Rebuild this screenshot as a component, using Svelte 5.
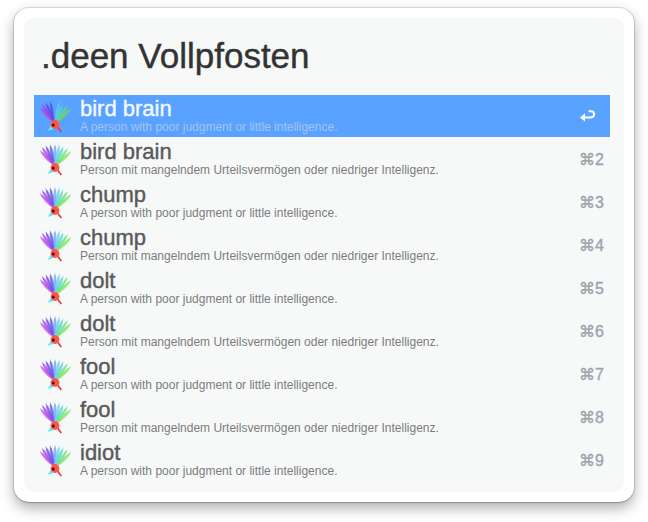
<script>
  let query = $state('.deen Vollpfosten');
  let selected = $state(0);

  const en = 'A person with poor judgment or little intelligence.';
  const de = 'Person mit mangelndem Urteilsvermögen oder niedriger Intelligenz.';
  const results = [
    { title: 'bird brain', text: en },
    { title: 'bird brain', text: de },
    { title: 'chump', text: en },
    { title: 'chump', text: de },
    { title: 'dolt', text: en },
    { title: 'dolt', text: de },
    { title: 'fool', text: en },
    { title: 'fool', text: de },
    { title: 'idiot', text: en }
  ];

  const feathers = [
    { x: 1.5, y: 8, color: '#c43ce6' },
    { x: 3.5, y: 4.5, color: '#9c3ce8' },
    { x: 7.5, y: 3, color: '#6a3ce0' },
    { x: 12, y: 2, color: '#4f48ec' },
    { x: 17, y: 1.5, color: '#6a9cf0' },
    { x: 21.5, y: 2, color: '#5fd0ee' },
    { x: 25.5, y: 4, color: '#50d6c0' },
    { x: 30, y: 6, color: '#62dc86' },
    { x: 33.5, y: 9, color: '#6ee24a' }
  ].map((f) => ({
    color: f.color,
    angle: (Math.atan2(f.x - 17, 25 - f.y) * 180) / Math.PI,
    tip: 25 - Math.hypot(f.x - 17, 25 - f.y)
  }));
</script>

<main>
  <section class="window">
    <div class="panel">
      <input class="query" type="text" aria-label="Search" bind:value={query} />
      <ul>
        {#each results as item, i}
          <li>
            <button class:selected={selected === i} onclick={() => (selected = i)}>
              <svg class="bird" viewBox="0 0 34 34" aria-hidden="true">
                {#each feathers as f}
                  <g transform="rotate({f.angle} 17 25)">
                    <path
                      d="M17 24 Q13.6 {f.tip + 9} 17 {f.tip} Q20.4 {f.tip + 9} 17 24Z"
                      fill={f.color}
                      fill-opacity="0.6"
                    />
                    <path d="M17 20V{f.tip + 3}" stroke={f.color} stroke-width="0.6" />
                  </g>
                {/each}
                <path d="M13 26.5 L9.5 32 L15.6 30Z" fill="#5feaf5" />
                <path d="M19.5 28 L23.3 33" stroke="#ef3340" stroke-width="1.7" />
                <circle cx="17" cy="25.5" r="4.4" fill="#fa5748" />
                <circle cx="15.4" cy="26" r="1.7" fill="#b12a25" />
                <circle cx="15.1" cy="26.2" r="1" fill="#120808" />
              </svg>
              <span class="copy">
                <span class="title">{item.title}</span>
                <span class="text">{item.text}</span>
              </span>
              {#if selected === i}
                <svg class="return" viewBox="0 0 16 12" aria-hidden="true">
                  <path d="M8.5 1.2H11A3 3 0 0 1 11 7.4H3" fill="none" stroke="#fff" stroke-width="2" />
                  <path d="M5 3.2V11.6L0 7.4Z" fill="#fff" />
                </svg>
              {:else}
                <kbd>⌘{i + 1}</kbd>
              {/if}
            </button>
          </li>
        {/each}
      </ul>
    </div>
  </section>
</main>

<style>
  :global(body) {
    margin: 0;
    background: #fff;
  }
  main {
    padding: 8px 14px 20px;
    font-family: 'Liberation Sans', Arial, sans-serif;
  }
  .window {
    padding: 10px;
    border-radius: 15px;
    background: #fff;
    box-shadow:
      0 0 1px 1px rgba(0, 0, 0, 0.13),
      0 1px 1px rgba(0, 0, 0, 0.14),
      0 6px 14px rgba(0, 0, 0, 0.32);
  }
  .panel {
    padding: 16px 14px 11px 10px;
    border-radius: 10px;
    background: #f7f9f9;
  }
  .query {
    display: block;
    box-sizing: border-box;
    width: 100%;
    height: 44px;
    margin: 0 0 17px;
    padding: 0 7px;
    border: 0;
    outline: 0;
    background: none;
    color: #333;
    font: 35px 'Liberation Sans', Arial, sans-serif;
    -webkit-text-stroke: 0.4px #333;
  }
  ul {
    display: flex;
    flex-direction: column;
    gap: 1px;
    margin: 0;
    padding: 0;
    list-style: none;
  }
  button {
    display: flex;
    align-items: center;
    box-sizing: border-box;
    width: 100%;
    height: 42px;
    padding: 0 6px 0 4px;
    border: 0;
    background: none;
    color: #5a5a5a;
    font-family: inherit;
    text-align: left;
  }
  .bird {
    flex: none;
    width: 34px;
    height: 34px;
    margin-right: 8px;
  }
  .copy {
    display: flex;
    flex: 1;
    flex-direction: column;
    min-width: 0;
  }
  .title {
    font-size: 22px;
    line-height: 22px;
    -webkit-text-stroke: 0.4px currentColor;
  }
  .text {
    color: #7c7c7c;
    font-size: 12px;
    line-height: 14px;
  }
  kbd {
    color: #a0a4ac;
    font: 16px 'Liberation Sans', Arial, sans-serif;
    -webkit-text-stroke: 0.4px currentColor;
  }
  .return {
    width: 16px;
    height: 12px;
    margin-right: 8px;
  }
  .selected {
    background: #5aa2ff;
    color: #f4f8ff;
  }
  .selected .text {
    color: #a5c3ef;
  }
</style>
